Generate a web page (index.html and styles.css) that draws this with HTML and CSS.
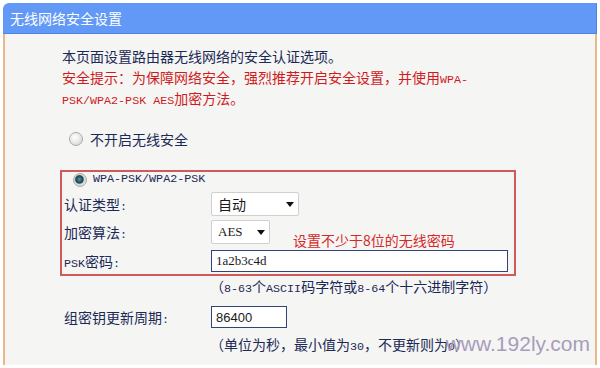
FILE: index.html
```html
<!DOCTYPE html>
<html lang="zh-CN">

<head>
    <title>无线网络安全设置</title>
    <meta charset="utf-8">
    <meta name="viewport" content="width=device-width, initial-scale=1.0">
    <link rel="stylesheet" href="styles.css">
</head>

<body>
    <div class="panel">
        <div class="panel-title">无线网络安全设置</div>
        <div class="panel-body">
            <div class="intro">
                <p>本页面设置路由器无线网络的安全认证选项。</p>
                <p class="warn">安全提示：为保障网络安全，强烈推荐开启安全设置，并使用<span class="en">WPA-</span></p>
                <p class="warn"><span class="en">PSK/WPA2-PSK AES</span>加密方法。</p>
            </div>

            <div class="radio-row">
                <span class="radio"></span>
                <span>不开启无线安全</span>
            </div>

            <div class="wpa-box">
                <div class="radio-row inner">
                    <span class="radio checked"></span>
                    <span class="en">WPA-PSK/WPA2-PSK</span>
                </div>
                <div class="field first">
                    <span class="label">认证类型<span class="en">:</span></span>
                    <div class="select select-wide">
                        <span>自动</span>
                        <i class="caret"></i>
                    </div>
                </div>
                <div class="field">
                    <span class="label">加密算法<span class="en">:</span></span>
                    <div class="select select-narrow">
                        <span class="serif">AES</span>
                        <i class="caret"></i>
                    </div>
                    <span class="hint">设置不少于8位的无线密码</span>
                </div>
                <div class="field last">
                    <span class="label"><span class="en">PSK</span>密码<span class="en">:</span></span>
                    <div class="input input-long serif">1a2b3c4d</div>
                </div>
            </div>

            <div class="note">（<span class="en">8-63</span>个<span class="en">ASCII</span>码字符或<span class="en">8-64</span>个十六进制字符）</div>

            <div class="field outer">
                <span class="label">组密钥更新周期<span class="en">:</span></span>
                <div class="input input-short">86400</div>
            </div>

            <div class="note second">（单位为秒，最小值为<span class="en">30</span>，不更新则为<span class="en">0</span>）</div>
        </div>
        <div class="watermark">www.192ly.com</div>
    </div>
</body>

</html>
```

FILE: styles.css
```css
body {
    margin: 0;
    padding: 0;
    background: #FFFFFF;
    font-family: "Noto Sans CJK SC", "Liberation Sans", sans-serif;
    font-size: 14px;
    color: #1b2955;
}

.panel {
    position: relative;
    margin: 3px 3px 0 3px;
    width: 594px;
}

.panel-title {
    height: 30px;
    line-height: 30px;
    padding-left: 7px;
    background: #6299f6;
    border-bottom: 1px solid #4c82e0;
    border-right: 1px solid #4c82e0;
    border-top-left-radius: 6px;
    color: #FFFFFF;
    font-size: 14px;
}

.panel-body {
    height: 331px;
    box-sizing: border-box;
    padding: 12px 0 0 57px;
    background: #f5f5f4;
    border-left: 2px solid #e8b88a;
    border-right: 2px solid #e8b88a;
}

.en {
    font-family: "Liberation Mono", monospace;
    font-size: 11.7px;
    line-height: 1;
}

.serif {
    font-family: "Liberation Serif", serif;
    font-size: 13px;
}

.intro p {
    margin: 0;
    height: 21px;
    line-height: 21px;
    white-space: nowrap;
}

.intro .warn {
    color: #d01b1d;
}

.radio-row {
    display: flex;
    align-items: center;
    gap: 7px;
    height: 20px;
    margin-top: 20px;
    padding-left: 7px;
}

.radio {
    width: 12px;
    height: 12px;
    border-radius: 50%;
    border: 1px solid #a9a9a9;
    background: radial-gradient(circle at 40% 35%, #ffffff 0%, #e4e4e4 60%, #c9c9c9 100%);
}

.radio.checked {
    background: radial-gradient(circle at 45% 45%, #5d9aa6 0%, #25606e 25%, #1a4652 40%, #d6d6d6 52%, #f2f2f2 100%);
}

.wpa-box {
    width: 448px;
    margin: 21px 0 0 -2px;
    padding: 0 2px;
    border: 2px solid #cf5a5a;
}

.radio-row.inner {
    margin-top: 0;
    height: 15px;
    padding-left: 9px;
    gap: 6px;
}

.field {
    display: flex;
    align-items: center;
    height: 28px;
}

.field.first {
    margin-top: 3px;
}

.field.last {
    margin-top: 2px;
    height: 26px;
}

.field.outer {
    margin-top: 7px;
    padding-left: 2px;
}

.label {
    width: 147px;
    flex-shrink: 0;
    white-space: nowrap;
}

.select {
    display: flex;
    align-items: center;
    justify-content: space-between;
    box-sizing: border-box;
    height: 24px;
    padding: 0 4px 0 6px;
    background: #FFFFFF;
    border: 1px solid #cfcfcf;
    border-radius: 2px;
    color: #1a1a1a;
}

.select-wide {
    width: 88px;
}

.select-narrow {
    width: 59px;
}

.caret {
    width: 0;
    height: 0;
    border-left: 4px solid transparent;
    border-right: 4px solid transparent;
    border-top: 5px solid #111111;
}

.hint {
    margin: 16px 0 0 23px;
    color: #d42a2a;
    white-space: nowrap;
}

.input {
    display: flex;
    align-items: center;
    box-sizing: border-box;
    height: 22px;
    padding-left: 4px;
    background: #FFFFFF;
    border: 1px solid #34427a;
    color: #1a1a1a;
}

.input-long {
    width: 297px;
}

.input-short {
    width: 76px;
    font-family: "Liberation Sans", sans-serif;
    font-size: 13px;
}

.note {
    height: 20px;
    line-height: 20px;
    padding-left: 148px;
    white-space: nowrap;
}

.note.second {
    margin-top: 3px;
}

.watermark {
    position: absolute;
    right: 7px;
    bottom: 9px;
    font-family: "Liberation Sans", sans-serif;
    font-size: 21px;
    line-height: 24px;
    color: #a99cbb;
}
```
